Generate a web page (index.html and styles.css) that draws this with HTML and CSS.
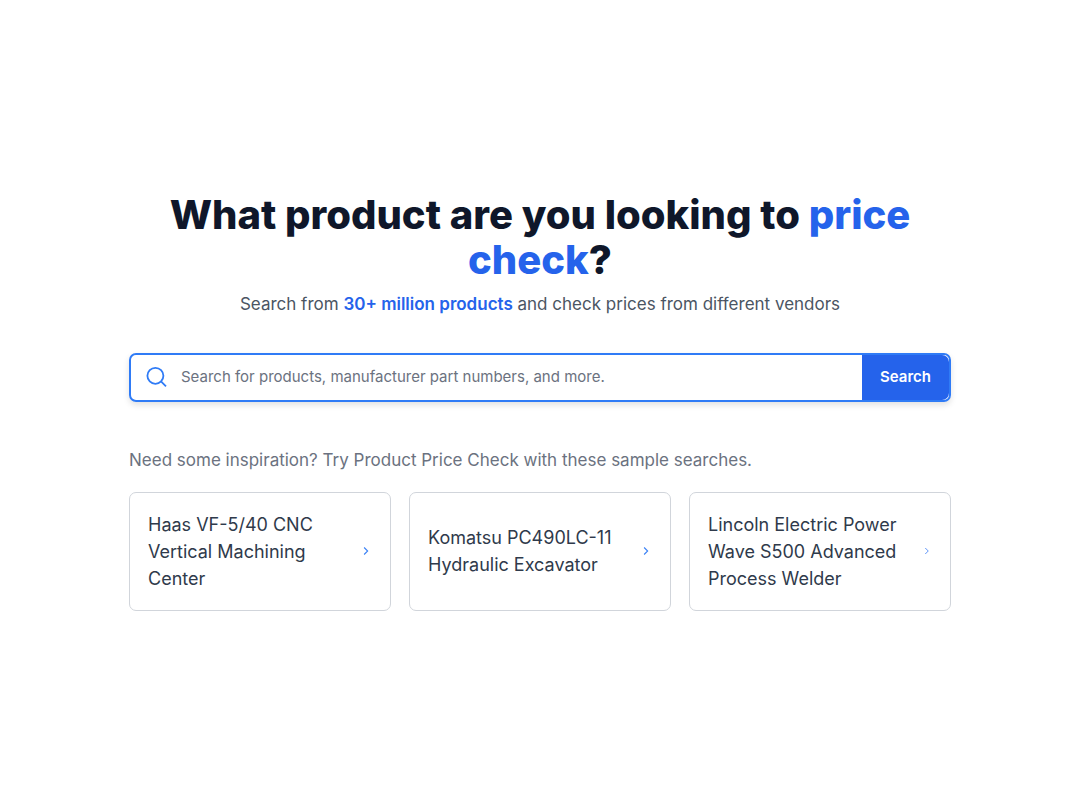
FILE: index.html
```html
<!DOCTYPE html>
<html lang="en">
<head>
<meta charset="utf-8">
<meta name="viewport" content="width=device-width, initial-scale=1">
<title>Product Price Check</title>
<link rel="stylesheet" href="styles.css">
</head>
<body>
<main class="page">
  <header class="hero">
    <h1 class="title">What product are you looking to <span class="accent">price check</span>?</h1>
    <p class="subtitle">Search from <strong class="highlight">30+ million products</strong> and check prices from different vendors</p>
  </header>
  <form class="search" role="search">
    <label class="search-icon" for="query" aria-label="Search products">
      <svg width="24" height="24" viewBox="0 0 24 24" fill="none" stroke="currentColor" stroke-width="1.8"><circle cx="11.4" cy="10.8" r="8"/><path d="m17 16.4 5 5"/></svg>
    </label>
    <input class="search-input" id="query" type="text" placeholder="Search for products, manufacturer part numbers, and more.">
    <button class="search-button" type="submit">Search</button>
  </form>
  <section class="samples">
    <p class="samples-intro">Need some inspiration? Try Product Price Check with these sample searches.</p>
    <div class="cards">
      <a class="card" href="#"><span class="card-text">Haas VF-5/40 CNC Vertical Machining Center</span><svg class="chevron" viewBox="0 0 16 16"><path d="m7 4 4 4-4 4"/></svg></a>
      <a class="card" href="#"><span class="card-text">Komatsu PC490LC-11 Hydraulic Excavator</span><svg class="chevron" viewBox="0 0 16 16"><path d="m7 4 4 4-4 4"/></svg></a>
      <a class="card" href="#"><span class="card-text">Lincoln Electric Power Wave S500 Advanced Process Welder</span><svg class="chevron chevron-small" viewBox="0 0 16 16"><path d="m7 4 4 4-4 4"/></svg></a>
    </div>
  </section>
</main>
</body>
</html>
```
FILE: styles.css
```css
* { box-sizing: border-box; }
body {
  margin: 0;
  background: #fff;
  color: #0f172a;
  font-family: Inter, "Liberation Sans", sans-serif;
}
.page {
  min-height: 100vh;
  width: 100%;
  max-width: 870px;
  margin: 0 auto;
  padding: 10px 24px 8px;
  display: flex;
  flex-direction: column;
  justify-content: center;
}
.hero { text-align: center; }
.title {
  margin: 0;
  font-size: 40px;
  line-height: 45px;
  font-weight: 800;
}
.accent { color: #2563eb; }
.subtitle {
  margin: 8px 0 0;
  font-size: 17px;
  line-height: 28px;
  color: #4b5563;
}
.highlight { font-weight: 600; color: #2563eb; }
.search {
  display: flex;
  align-items: stretch;
  height: 49px;
  margin-top: 35px;
  border: 2px solid #2f7bf6;
  border-radius: 7px;
  box-shadow: 0 3px 6px rgba(0, 0, 0, 0.12);
}
.search-icon {
  display: flex;
  align-items: center;
  padding: 0 13px;
  color: #2f7bf6;
}
.search-input {
  flex: 1;
  min-width: 0;
  padding: 0;
  border: 0;
  outline: 0;
  background: transparent;
  font: 15px/24px Inter, "Liberation Sans", sans-serif;
  color: #374151;
}
.search-input::placeholder { color: #6b7280; opacity: 1; }
.search-button {
  padding: 0 18px;
  border: 0;
  border-radius: 0 7px 7px 0;
  background: #2563eb;
  color: #fff;
  font: 600 15px/24px Inter, "Liberation Sans", sans-serif;
}
.samples { margin-top: 44px; }
.samples-intro {
  margin: 0;
  font-size: 17px;
  line-height: 28px;
  color: #6b7280;
}
.cards {
  display: grid;
  grid-template-columns: repeat(3, 1fr);
  gap: 18px;
  margin-top: 18px;
}
.card {
  display: flex;
  align-items: center;
  justify-content: space-between;
  min-height: 118px;
  padding: 18px;
  border: 1px solid #d1d5db;
  border-radius: 7px;
  color: #2f3a4b;
  font-size: 18px;
  line-height: 27px;
  text-decoration: none;
}
.card-text { flex: 0 1 196px; }
.chevron {
  flex: none;
  width: 14px;
  height: 14px;
  fill: none;
  stroke: #3b82f6;
  stroke-width: 1.3;
}
.chevron-small { width: 12px; height: 12px; stroke: #5b93fa; }
```
